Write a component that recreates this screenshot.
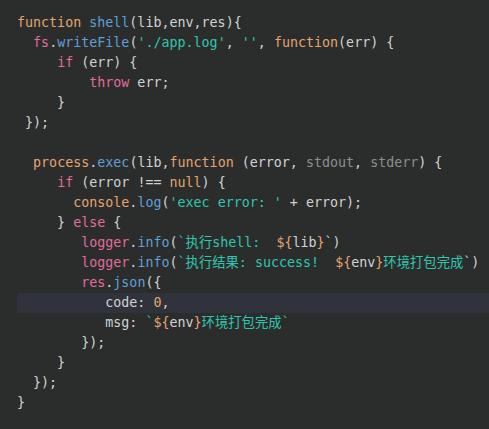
const K = "text-[#e06c9c]"; // keywords / objects in pink
const O = "text-[#e5a46b]"; // orange
const B = "text-[#5f9fd6]"; // blue
const S = "text-[#2fc6b0]"; // strings
const D = "text-[#d2d2d2]"; // default
const G = "text-[#8d8d8d]"; // params dimmed

const lines = [
  [[O, "function "], [B, "shell"], [D, "(lib,env,res){"]],
  [[D, "  "], [K, "fs"], [D, "."], [B, "writeFile"], [D, "("], [S, "'./app.log'"], [D, ", "], [S, "''"], [D, ", "], [O, "function"], [D, "(err) {"]],
  [[D, "     "], [K, "if"], [D, " (err) {"]],
  [[D, "         "], [K, "throw"], [D, " err;"]],
  [[D, "     }"]],
  [[D, " });"]],
  [[D, ""]],
  [[D, "  "], [O, "process"], [D, "."], [B, "exec"], [D, "(lib,"], [O, "function"], [D, " (error, "], [G, "stdout"], [D, ", "], [G, "stderr"], [D, ") {"]],
  [[D, "     "], [K, "if"], [D, " (error !== "], [O, "null"], [D, ") {"]],
  [[D, "       "], [O, "console"], [D, "."], [B, "log"], [D, "("], [S, "'exec error: '"], [D, " + error);"]],
  [[D, "     } "], [K, "else"], [D, " {"]],
  [[D, "        "], [K, "logger"], [D, "."], [B, "info"], [D, "("], [S, "`执行shell:  "], [O, "${"], [D, "lib"], [O, "}"], [D, "`)"]],
  [[D, "        "], [K, "logger"], [D, "."], [B, "info"], [D, "("], [S, "`执行结果: success!  "], [O, "${"], [D, "env"], [O, "}"], [S, "环境打包完成"], [D, "`)"]],
  [[D, "        "], [K, "res"], [D, "."], [B, "json"], [D, "({"]],
  [[D, "           code: "], [O, "0"], [D, ","]],
  [[D, "           msg: "], [S, "`"], [O, "${"], [D, "env"], [O, "}"], [S, "环境打包完成`"]],
  [[D, "        });"]],
  [[D, "     }"]],
  [[D, "  });"]],
  [[D, "}"]],
];

export default function App() {
  return (
    <div className="min-h-screen bg-[#2b2d2d] pt-[13px] pl-[17px] text-[13.33px] leading-[20px] font-['DejaVu_Sans_Mono','Noto_Sans_CJK_SC',monospace] overflow-hidden">
      {lines.map((line, i) => (
        <div
          key={i}
          className={`h-[20px] whitespace-pre ${i === 14 ? "bg-[#31333c]" : ""}`}
        >
          {line.map(([cls, txt], j) => (
            <span key={j} className={cls}>{txt}</span>
          ))}
        </div>
      ))}
    </div>
  );
}
